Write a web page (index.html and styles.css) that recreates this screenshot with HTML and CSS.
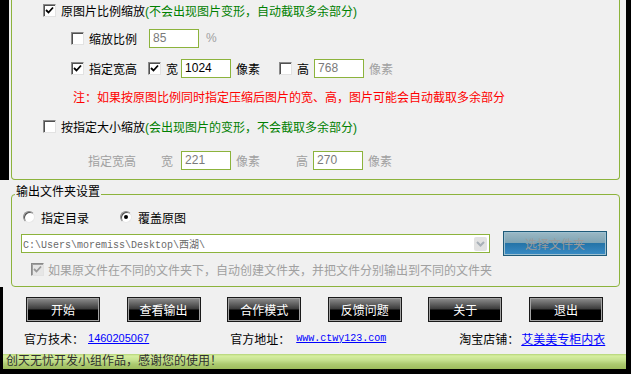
FILE: index.html
```html
<!DOCTYPE html>
<html lang="zh-CN">

<head>
    <meta charset="UTF-8">
    <title>图片批量压缩</title>
    <link rel="stylesheet" href="styles.css">
</head>

<body>
    <div class="app">
        <!-- Scale Settings -->
        <div class="top-area">
            <div class="scale-group">
                <div class="row row-1">
                    <span class="check on"><svg viewBox="0 0 11 11"><path d="M2 5 L4.5 7.5 L9 2.5"/></svg></span>
                    <span class="label">原图片比例缩放</span>
                    <span class="hint">(不会出现图片变形，自动截取多余部分)</span>
                </div>
                <div class="row row-2 sub">
                    <span class="check"></span>
                    <span class="label">缩放比例</span>
                    <input class="num off ml12" value="85">
                    <span class="muted ml7">%</span>
                </div>
                <div class="row row-3 sub">
                    <span class="check on"><svg viewBox="0 0 11 11"><path d="M2 5 L4.5 7.5 L9 2.5"/></svg></span>
                    <span class="label">指定宽高</span>
                    <span class="check on ml11"><svg viewBox="0 0 11 11"><path d="M2 5 L4.5 7.5 L9 2.5"/></svg></span>
                    <span class="label">宽</span>
                    <input class="num ml3" value="1024">
                    <span class="ml5">像素</span>
                    <span class="check ml19"></span>
                    <span class="label">高</span>
                    <input class="num off ml5" value="768">
                    <span class="muted ml5">像素</span>
                </div>
                <div class="row row-4 note">
                    注：如果按原图比例同时指定压缩后图片的宽、高，图片可能会自动截取多余部分
                </div>
                <div class="row row-5">
                    <span class="check"></span>
                    <span class="label">按指定大小缩放</span>
                    <span class="hint">(会出现图片的变形，不会截取多余部分)</span>
                </div>
                <div class="row row-6 size">
                    <span class="muted">指定宽高</span>
                    <span class="muted ml25">宽</span>
                    <input class="num off ml8" value="221">
                    <span class="muted ml5">像素</span>
                    <span class="muted ml36">高</span>
                    <input class="num off ml5" value="270">
                    <span class="muted ml5">像素</span>
                </div>
            </div>
        </div>

        <!-- Output Folder -->
        <div class="output-area">
            <fieldset class="output-group">
                <legend>输出文件夹设置</legend>
                <div class="output-body">
                    <div class="row radio-row">
                        <span class="radio"></span>
                        <span class="ml6">指定目录</span>
                        <span class="radio on ml31"></span>
                        <span class="ml6">覆盖原图</span>
                    </div>
                    <div class="row folder-row">
                        <div class="combo">
                            <span class="path">C:\Users\moremiss\Desktop\西湖\</span>
                            <span class="combo-arrow"><svg viewBox="0 0 13 13"><path d="M3 5 L6.5 8.5 L10 5"/></svg></span>
                        </div>
                        <button class="pick-btn" disabled>选择文件夹</button>
                    </div>
                    <div class="row sub-row">
                        <span class="check dim"><svg viewBox="0 0 11 11"><path d="M2 5 L4.5 7.5 L9 2.5"/></svg></span>
                        <span class="muted ml4">如果原文件在不同的文件夹下，自动创建文件夹，并把文件分别输出到不同的文件夹</span>
                    </div>
                </div>
            </fieldset>
        </div>

        <!-- Actions & Footer -->
        <div class="bottom-area">
            <div class="button-row">
                <button class="action-btn">开始</button>
                <button class="action-btn">查看输出</button>
                <button class="action-btn">合作模式</button>
                <button class="action-btn">反馈问题</button>
                <button class="action-btn">关于</button>
                <button class="action-btn">退出</button>
            </div>
            <div class="info-row">
                <span>官方技术：</span>
                <a class="link qq" href="#">1460205067</a>
                <span class="ml81">官方地址：</span>
                <a class="link site" href="#">www.ctwy123.com</a>
                <span class="ml73">淘宝店铺：</span>
                <a class="link" href="#">艾美美专柜内衣</a>
            </div>
            <div class="status-bar">创天无忧开发小组作品，感谢您的使用！</div>
        </div>
    </div>
</body>

</html>
```

FILE: styles.css
```css
/* Window */
body {
    margin: 0;
    background-color: #000;
    font-family: "Liberation Sans", "Noto Sans CJK SC", sans-serif;
    font-size: 12px;
    color: #000;
}

.app {
    width: 626px;
    height: 369px;
    background-color: #f0f0f0;
    display: flex;
    flex-direction: column;
}

/* Shared rows & controls */
.row {
    display: flex;
    align-items: center;
    height: 20px;
    white-space: nowrap;
}

.label {
    margin-left: 5px;
}

.hint {
    color: #008000;
}

.muted {
    color: #a0a0a0;
}

.check {
    width: 13px;
    height: 13px;
    box-sizing: border-box;
    background-color: #fff;
    border: 1px solid;
    border-color: #8a8a8a #e2e2e2 #e2e2e2 #8a8a8a;
    box-shadow: inset 1px 1px 0 #505050;
    display: flex;
    align-items: center;
    justify-content: center;
    flex-shrink: 0;
}

.check svg {
    width: 11px;
    height: 11px;
    fill: none;
    stroke: #000;
    stroke-width: 1.8;
}

.check.dim {
    background-color: #e6e6e6;
    box-shadow: inset 1px 1px 0 #a0a0a0;
}

.check.dim svg {
    stroke: #9a9a9a;
}

.radio {
    width: 12px;
    height: 12px;
    box-sizing: border-box;
    border-radius: 50%;
    background-color: #fff;
    border: 1px solid;
    border-color: #8a8a8a #e8e8e8 #e8e8e8 #8a8a8a;
    box-shadow: inset 1px 1px 0 #505050;
    display: flex;
    align-items: center;
    justify-content: center;
    flex-shrink: 0;
}

.radio.on::after {
    content: "";
    width: 4px;
    height: 4px;
    border-radius: 50%;
    background-color: #000;
}

.num {
    width: 50px;
    height: 19px;
    box-sizing: border-box;
    border: 1px solid #8cb33c;
    background-color: #fff;
    padding: 0 0 0 3px;
    margin-top: 0;
    margin-bottom: 0;
    font-family: "Liberation Sans", sans-serif;
    font-size: 12px;
    color: #000;
    outline: none;
}

.num.off {
    color: #7a7a7a;
}

/* spacing helpers */
.ml3 { margin-left: 3px; }
.ml4 { margin-left: 4px; }
.ml5 { margin-left: 5px; }
.ml6 { margin-left: 6px; }
.ml7 { margin-left: 7px; }
.ml8 { margin-left: 8px; }
.ml11 { margin-left: 11px; }
.ml12 { margin-left: 12px; }
.ml19 { margin-left: 19px; }
.ml25 { margin-left: 25px; }
.ml31 { margin-left: 31px; }
.ml36 { margin-left: 36px; }
.ml73 { margin-left: 73px; }
.ml81 { margin-left: 81px; }

/* Scale settings group */
.top-area {
    height: 180px;
    border-left: 9px solid #000;
    padding-left: 2px;
}

.scale-group {
    width: 609px;
    height: 180px;
    box-sizing: border-box;
    border: 1px solid #8cb33c;
    border-top: none;
    border-radius: 0 0 4px 4px;
    padding-left: 31px;
}

.scale-group .sub {
    padding-left: 28px;
}

.row-2 { margin-top: 8px; }
.row-3 { margin-top: 10px; }
.row-4 { margin-top: 8px; }
.row-5 { margin-top: 10px; }
.row-6 { margin-top: 14px; }

.note {
    color: #ff0000;
    padding-left: 30px;
}

.size {
    padding-left: 45px;
}

/* Output folder group */
.output-area {
    height: 107px;
    padding-left: 11px;
}

.output-group {
    margin: 5px 0 0 0;
    width: 609px;
    height: 102px;
    box-sizing: border-box;
    border: 1px solid #8cb33c;
    border-radius: 4px;
    padding: 0;
}

.output-group legend {
    margin-left: 3px;
    padding: 0 1px 4px 1px;
    line-height: 14px;
}

.output-body {
    padding-left: 9px;
}

.radio-row {
    margin-top: 4px;
    padding-left: 2px;
}

.folder-row {
    margin-top: 4px;
    height: 25px;
}

.combo {
    width: 469px;
    height: 19px;
    box-sizing: border-box;
    border: 1px solid #8cb33c;
    background-color: #fff;
    display: flex;
    align-items: center;
    justify-content: space-between;
    padding: 0 2px 0 1px;
}

.combo .path {
    font-family: "Liberation Mono", "Noto Sans CJK SC", monospace;
    font-size: 10px;
    color: #6a6a6a;
}

.combo-arrow {
    width: 13px;
    height: 14px;
    background-color: #e2e2e2;
    border-radius: 2px;
    display: flex;
}

.combo-arrow svg {
    width: 13px;
    height: 13px;
    fill: none;
    stroke: #a8b0b8;
    stroke-width: 2;
}

.pick-btn {
    margin-left: 13px;
    width: 104px;
    height: 25px;
    border: 1px solid #1f5a78;
    box-shadow: inset 0 0 0 1px #9cc0d0;
    background: linear-gradient(#9cb8c4 0%, #7ea4b4 46%, #2474a8 50%, #3a8cc6 100%);
    color: #9a9a9a;
    font-family: inherit;
    font-size: 12px;
    padding: 0;
}

.sub-row {
    margin-top: 6px;
    height: 14px;
    padding-left: 10px;
}

/* Bottom area */
.bottom-area {
    height: 82px;
    box-sizing: border-box;
    border-left: 3px solid #000;
    display: flex;
    flex-direction: column;
}

.button-row {
    display: flex;
    gap: 26.6px;
    padding: 10px 0 0 23px;
}

.action-btn {
    width: 74px;
    height: 25px;
    border: 1px solid #1a1a1a;
    box-shadow: inset 0 0 0 1px #a4a4a4;
    background: linear-gradient(#909090 0%, #3a3a3a 48%, #000 52%, #000 100%);
    color: #fff;
    font-family: inherit;
    font-size: 12px;
    padding: 0;
}

.info-row {
    display: flex;
    align-items: center;
    height: 14px;
    margin-top: 9px;
    padding-left: 21px;
    white-space: nowrap;
}

.link {
    color: #0000ff;
    text-decoration: underline;
}

.link.qq {
    margin-left: 4px;
    font-size: 11px;
}

.link.site {
    margin-left: 6px;
    font-family: "Liberation Mono", monospace;
    font-size: 10px;
}

.info-row .link:last-child {
    margin-left: 2px;
}

.status-bar {
    margin-top: 9px;
    height: 15px;
    line-height: 15px;
    padding-left: 3px;
    color: #303030;
    background: linear-gradient(#b4d478 0, #d6eea0 2px, #c6e290 6px, #acca70 10px, #9cbc5c 15px);
    white-space: nowrap;
}
```
